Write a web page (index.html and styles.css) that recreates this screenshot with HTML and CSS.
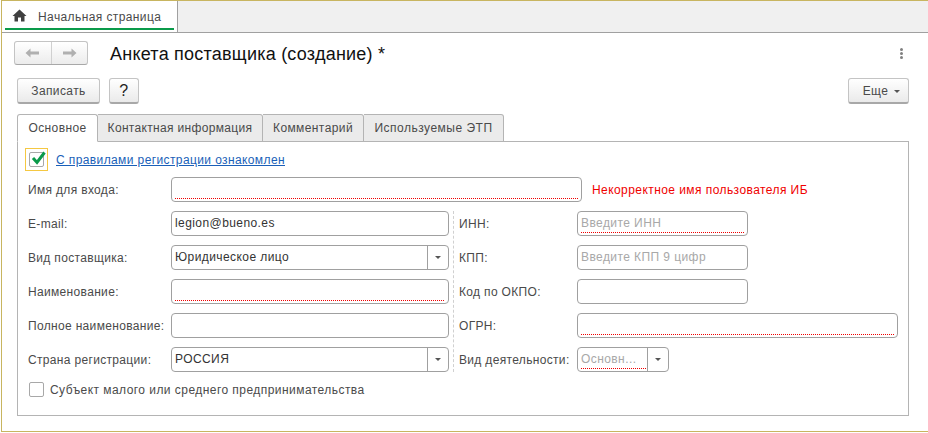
FILE: index.html
```html
<!DOCTYPE html>
<html lang="ru">
<head>
<meta charset="utf-8">
<title>Анкета поставщика</title>
<link rel="stylesheet" href="styles.css">
</head>
<body>
<div class="shell">
  <div class="tabbar">
    <div class="hometab">
      <svg class="homeicon" width="15" height="13" viewBox="0 0 15 13"><path d="M7.5 0.5 L0.5 7 L2.5 7 L2.5 12.5 L6 12.5 L6 8.5 L9 8.5 L9 12.5 L12.5 12.5 L12.5 7 L14.5 7 Z" fill="#404040"/></svg>
      <span class="hometext">Начальная страница</span>
    </div>
  </div>
  <div class="page">
    <div class="titlerow">
      <div class="navgroup">
        <div class="navbtn navbtn-first"><svg width="16" height="10" viewBox="0 0 16 10"><path d="M0.5 5 L5.5 0.5 L5.5 3.5 L14 3.5 L14 6.5 L5.5 6.5 L5.5 9.5 Z" fill="#b0b0b0"/></svg></div>
        <div class="navbtn"><svg width="16" height="10" viewBox="0 0 16 10"><path d="M15.5 5 L10.5 0.5 L10.5 3.5 L2 3.5 L2 6.5 L10.5 6.5 L10.5 9.5 Z" fill="#b0b0b0"/></svg></div>
      </div>
      <h1 class="title">Анкета поставщика (создание) *</h1>
      <div class="dots"><i></i><i></i><i></i></div>
    </div>
    <div class="toolbar">
      <button class="btn btn-save">Записать</button>
      <button class="btn btn-help">?</button>
      <button class="btn btn-more">Еще<span class="caret"></span></button>
    </div>
    <div class="tabs">
      <div class="tab tab-active">Основное</div>
      <div class="tab tab-contact">Контактная информация</div>
      <div class="tab tab-comment">Комментарий</div>
      <div class="tab tab-etp">Используемые ЭТП</div>
    </div>
    <div class="panel">
      <div class="agree">
        <div class="focusbox">
          <div class="check"><svg width="17" height="15" viewBox="0 0 17 15"><path d="M3 7 L7 11.5 L14.5 1.5" fill="none" stroke="#0a9a4a" stroke-width="3"/></svg></div>
        </div>
        <a class="link" href="#">С правилами регистрации ознакомлен</a>
      </div>
      <div class="row-login">
        <label class="label label-left">Имя для входа:</label>
        <div class="field field-login"><div class="val invalid"></div></div>
        <div class="error">Некорректное имя пользователя ИБ</div>
      </div>
      <div class="grid">
        <label class="label label-left">E-mail:</label>
        <div class="field"><div class="val">legion@bueno.es</div></div>
        <div class="divider"></div>
        <label class="label">ИНН:</label>
        <div class="field field-short"><div class="val invalid hint">Введите ИНН</div></div>

        <label class="label label-left">Вид поставщика:</label>
        <div class="field field-select"><div class="val">Юридическое лицо</div><div class="drop"><span class="caret"></span></div></div>
        <label class="label">КПП:</label>
        <div class="field field-short"><div class="val hint">Введите КПП 9 цифр</div></div>

        <label class="label label-left">Наименование:</label>
        <div class="field"><div class="val invalid"></div></div>
        <label class="label">Код по ОКПО:</label>
        <div class="field field-short"><div class="val"></div></div>

        <label class="label label-left">Полное наименование:</label>
        <div class="field"><div class="val"></div></div>
        <label class="label">ОГРН:</label>
        <div class="field field-wide"><div class="val invalid"></div></div>

        <label class="label label-left">Страна регистрации:</label>
        <div class="field field-select"><div class="val">РОССИЯ</div><div class="drop"><span class="caret"></span></div></div>
        <label class="label">Вид деятельности:</label>
        <div class="field field-select field-tiny"><div class="val invalid hint">Основн...</div><div class="drop"><span class="caret"></span></div></div>
      </div>
      <div class="sme">
        <div class="check"></div>
        <span class="label sme-text">Субъект малого или среднего предпринимательства</span>
      </div>
    </div>
  </div>
</div>
</body>
</html>
```
FILE: styles.css
```css
* { box-sizing: border-box; }
html, body { margin: 0; padding: 0; background: #fff; }
body { width: 928px; height: 433px; overflow: hidden; font: 12px "Liberation Sans", Arial, sans-serif; color: #4a4a4a; letter-spacing: 0.4px; }
.shell { height: 432px; margin-left: 1px; border-top: 1px solid #c8b560; border-left: 1px solid #c8b560; border-bottom: 1px solid #c8b560; }
.tabbar { height: 32px; background: #f0f0f0; border-bottom: 1px solid #a0a0a0; display: flex; }
.hometab { width: 176px; height: 31px; background: #fff; border-right: 1px solid #a0a0a0; padding-left: 10px; display: flex; align-items: center; gap: 11px; position: relative; padding-bottom: 3px; color: #4a4a4a; }
.hometab::after { content: ""; position: absolute; left: 3px; right: 3px; bottom: 2px; height: 2px; background: #0a9a4a; }
.hometext { margin-top: 4px; }
.homeicon { flex: none; }
.page { padding: 8px 19px 0 15px; }
.titlerow { display: flex; align-items: center; height: 24px; margin-left: -3px; }
.navgroup { display: flex; width: 74px; height: 24px; border: 1px solid #c4c4c4; border-bottom-color: #a8a8a8; border-radius: 3px; background: linear-gradient(#fff, #ececec); }
.navbtn { flex: 1; display: flex; align-items: center; justify-content: center; }
.navbtn-first { border-right: 1px solid #d0d0d0; }
.title { margin: 0 0 0 22px; font-size: 18px; font-weight: 400; color: #111; flex: 1; line-height: 24px; position: relative; top: 1px; letter-spacing: 0.23px; }
.dots { display: flex; flex-direction: column; gap: 1px; margin-right: 6px; }
.dots i { display: block; width: 3px; height: 3px; background: #808080; border-radius: 50%; }
.toolbar { display: flex; margin-top: 13px; height: 26px; gap: 9px; }
.btn { height: 26px; padding: 0; font: 12px "Liberation Sans", Arial, sans-serif; color: #4a4a4a; border: 1px solid #c4c4c4; border-bottom: 2px solid #a8a8a8; border-radius: 3px; background: linear-gradient(#fff, #eaeaea); letter-spacing: 0.4px; }
.btn-save { width: 83px; }
.btn-help { width: 30px; font-size: 16px; color: #222; }
.btn-more { width: 61px; margin-left: auto; padding-left: 6px; }
.caret { display: inline-block; border: 3px solid transparent; border-top: 3px solid #555; border-bottom: 0; vertical-align: middle; margin-left: 6px; }
.tabs { display: flex; margin-top: 10px; height: 28px; position: relative; z-index: 1; margin-bottom: -1px; }
.tab { height: 28px; border: 1px solid #b4b4b4; border-left: 0; border-radius: 0 3px 0 0; background: #ebebeb; line-height: 26px; text-align: center; color: #4a4a4a; }
.tab-active { width: 81px; border-left: 1px solid #b4b4b4; border-bottom-color: #fff; background: #fff; border-radius: 3px 3px 0 0; }
.tab-contact { width: 165px; letter-spacing: 0.33px; }
.tab-comment { width: 101px; }
.tab-etp { width: 140px; letter-spacing: 0.5px; }
.panel { height: 275px; border: 1px solid #b4b4b4; padding: 6px 0 0 7px; }
.agree { display: flex; align-items: center; height: 23px; }
.focusbox { width: 23px; height: 23px; border: 1px solid #f5c842; padding: 3px; }
.check { width: 15px; height: 15px; flex: none; border: 1px solid #a8a8a8; border-radius: 2px; background: #fff; position: relative; }
.check svg { position: absolute; left: 0; top: -2px; }
.link { margin-left: 8px; color: #1a5fb8; text-decoration: underline; letter-spacing: 0.39px; }
.label { color: #4a4a4a; white-space: nowrap; align-self: center; letter-spacing: 0.33px; }
.sme-text { letter-spacing: 0.45px; }
.row-login { display: flex; align-items: center; margin: 6px 0 9px 4px; }
.label-left { width: 143px; flex: none; margin-left: -1px; }
.field { height: 25px; border: 1px solid #a0a0a0; border-radius: 4px; background: #fff; padding: 2px 3px; display: flex; color: #333; }
.field-login { width: 411px; flex: none; }
.error { margin-left: 10px; color: #f00000; letter-spacing: 0.43px; }
.val { flex: 1; min-width: 0; height: 19px; line-height: 18px; white-space: nowrap; overflow: hidden; letter-spacing: 0.42px; }
.invalid { background: repeating-linear-gradient(90deg, #f00000 0 1px, #ffffff 1px 2px) left bottom / 100% 1px no-repeat; }
.hint { color: #a8a8a8; }
.grid { display: grid; grid-template-columns: 142px 278px 10px 118px 321px; grid-auto-rows: 25px; row-gap: 9px; margin-left: 4px; justify-items: start; }
.grid .field { width: 100%; }
.grid .field-short { width: 171px; }
.grid .field-wide { width: 321px; }
.grid .field-tiny { width: 92px; }
.divider { grid-column: 3; grid-row: 1 / span 5; width: 0; margin-left: 4px; border-left: 1px dashed #d0d0d0; height: 100%; }
.field-select { padding-right: 0; }
.drop { width: 21px; margin: -2px 0; border-left: 1px solid #a0a0a0; display: flex; align-items: center; justify-content: center; flex: none; }
.drop .caret { margin-left: 0; }
.field-tiny .val { margin-right: 1px; }
.sme { display: flex; align-items: center; gap: 6px; margin: 10px 0 0 4px; height: 15px; }
```
